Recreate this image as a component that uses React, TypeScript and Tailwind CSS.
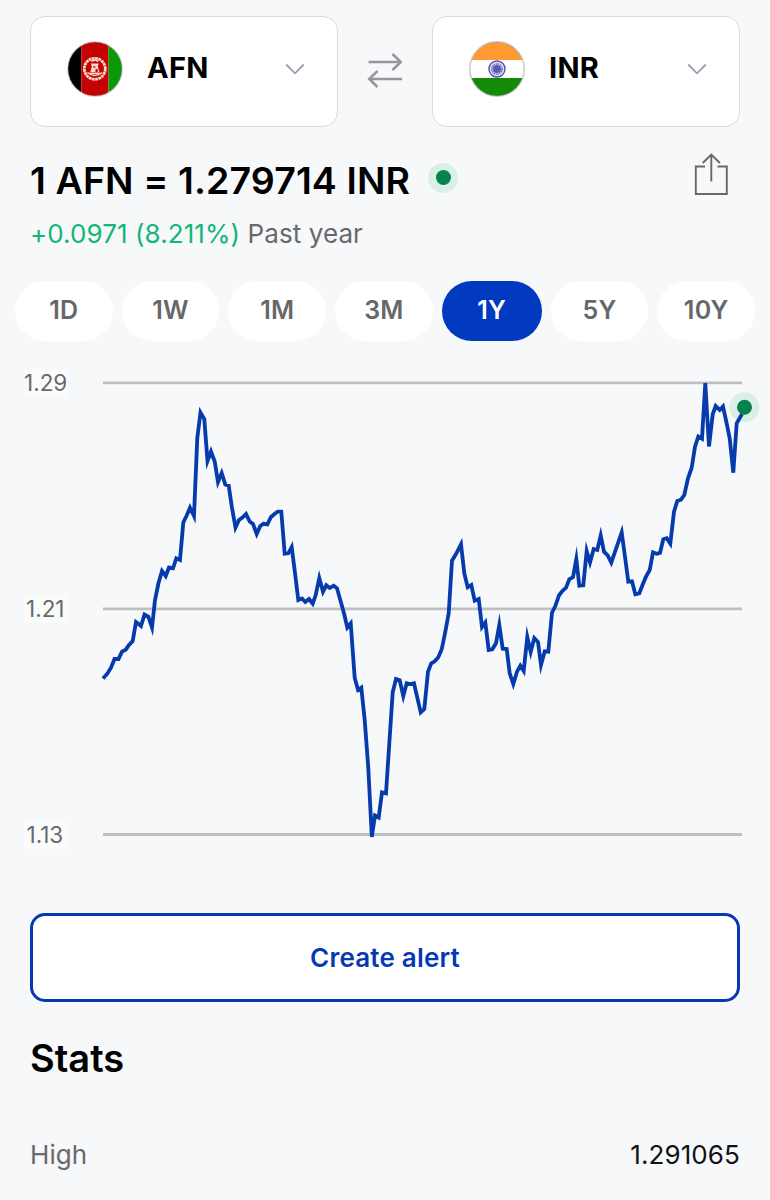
import React, { useState } from 'react';

type Point = [number, number];

const RANGES = ['1D', '1W', '1M', '3M', '1Y', '5Y', '10Y'];

const GRID = [
  { label: '1.29', x: 24, y: 382.8 },
  { label: '1.21', x: 26, y: 608.8 },
  { label: '1.13', x: 26.5, y: 834.5 },
];

const YEAR_POINTS: Point[] = [
  [103, 678.5], [107.3, 673.7], [111, 667.7], [114.5, 659], [118.5, 659], [122, 651.7], [125.7, 649.7],
  [129, 645], [132.7, 641], [136, 622], [141, 626], [144.5, 614.5], [148.3, 616.5], [152, 627.5],
  [155, 600], [158.5, 583], [162, 571], [165.7, 576], [169, 567.5], [173, 568.3], [176.3, 558.3],
  [180, 560], [183.3, 522.5], [186.7, 515.5], [190, 507.7], [194, 516], [197.3, 438], [200.5, 412.5],
  [204.3, 419], [207.5, 461], [211, 451.5], [214.7, 461.5], [218, 482], [221.7, 473], [225.3, 484.5],
  [228.7, 485.7], [232, 508], [235.5, 527.5], [239, 520], [242.5, 517.5], [246, 514], [249.7, 521.5],
  [253, 524], [256.7, 534], [260.3, 526], [263.7, 523.5], [267.3, 524.5], [271, 517], [274.5, 514],
  [277.7, 511.6], [281.3, 511.6], [284.7, 553.6], [288.3, 553.3], [291.7, 547], [295, 573], [298.3, 600],
  [302, 598.5], [305.3, 602], [309, 599], [312.7, 603.7], [315.7, 595], [319.3, 578], [323, 591.7],
  [326.3, 585.3], [329.7, 588], [333.7, 585.7], [337, 588.3], [340.3, 600], [344, 613.3], [347.3, 627.5],
  [350.7, 623.4], [354.7, 677.7], [358, 690], [361.3, 687.7], [364.7, 720], [368.3, 768], [371.8, 837],
  [375, 815.5], [378.7, 817.5], [382, 792.3], [386, 793.3], [389.3, 743.3], [392.7, 692.3], [396, 679],
  [399.7, 680.3], [403.3, 696], [406.7, 683.3], [410.3, 684], [414, 683.3], [417.3, 697.7], [420.7, 712.3],
  [424.3, 709], [428, 671.7], [431.3, 663.3], [434.7, 661.3], [438.3, 657.3], [441.7, 649.3], [445, 633.3],
  [448.7, 613.3], [452, 560.7], [456, 554], [461, 544.3], [464.3, 573.3], [467.7, 587.3], [471.3, 585],
  [474.7, 600.7], [478.7, 599], [482, 627], [485.3, 622.5], [488.7, 650], [492.3, 649.3], [496, 643.3],
  [499.3, 625], [502.7, 648.7], [506.7, 649], [509.7, 673.3], [513.3, 684], [517, 671.7], [520.3, 665.7],
  [523.7, 671], [527.3, 637], [530.7, 652], [534.3, 638], [538, 642], [541, 665], [544.7, 651.3],
  [548.3, 651.7], [552, 612.7], [555.3, 606], [559, 595.3], [562.3, 591], [566, 587.7], [569.3, 579.3],
  [573, 577], [576.3, 559], [579.3, 585.7], [583.3, 585.3], [586.7, 551], [590, 562.5], [593.7, 549],
  [597.3, 550], [600.7, 535.4], [604, 551.7], [607.7, 555.3], [611.3, 562.5], [614.7, 552.7], [621.7, 532.5],
  [625, 556.7], [628.3, 581.7], [632, 581.3], [635.3, 594.3], [639.3, 593.3], [642.5, 585], [646, 576.7],
  [649.7, 570], [653, 552.3], [656.7, 553.7], [660, 553], [663.3, 539.3], [666.7, 538.3], [670.3, 543.7],
  [674, 511.7], [677.3, 501], [681, 499.7], [684.3, 495], [688, 478.3], [691.7, 467.7], [695, 446.7],
  [698.3, 436.5], [702, 438.7], [705.3, 383], [709, 446.5], [712.7, 414.3], [715.7, 406], [719.7, 410],
  [723, 406.5], [726.3, 421.7], [729.7, 438.3], [733.3, 472.7], [736.7, 423.3], [742, 414],
];

function AfghanFlag() {
  return (
    <svg width="56" height="56" viewBox="0 0 56 56">
      <clipPath id="af-clip">
        <circle cx="28" cy="28" r="27" />
      </clipPath>
      <g clipPath="url(#af-clip)">
        <rect width="14.3" height="56" fill="#000" />
        <rect x="14.3" width="27.2" height="56" fill="#c40202" />
        <rect x="41.5" width="15" height="56" fill="#0a9a07" />
      </g>
      <circle cx="28" cy="28" r="27.2" fill="none" stroke="#999" strokeOpacity=".5" strokeWidth="1.2" />
      <g fill="none" stroke="#f7d8cb">
        <circle cx="27.8" cy="27.8" r="10.5" strokeWidth="2.8" strokeDasharray="2.8 .5" />
        <path d="M20.5 31.5q7.3 6 14.6 0" strokeWidth="1.6" />
        <path d="M24.5 20.5q3.3-2.4 6.6 0M23 32.2h9.6" strokeWidth="1.6" />
      </g>
      <path d="M24 22.6h7.8l-1 3 1.6 5.4h-9l1.4-5.4z" fill="#f7d8cb" />
      <path d="M26.3 25.2h2v1.6h-2zM28.5 28h2.2v3h-2.2z" fill="#c40202" />
    </svg>
  );
}

function IndianFlag() {
  return (
    <svg width="56" height="56" viewBox="0 0 56 56">
      <clipPath id="in-clip">
        <circle cx="28" cy="28" r="27" />
      </clipPath>
      <g clipPath="url(#in-clip)">
        <rect width="56" height="56" fill="#fff" />
        <rect width="56" height="19" fill="#ff9a33" />
        <rect y="37" width="56" height="19" fill="#138a08" />
      </g>
      <circle cx="28" cy="28" r="27.2" fill="none" stroke="#999" strokeOpacity=".5" strokeWidth="1.5" />
      <circle cx="28" cy="28" r="8" fill="#e6e5f5" stroke="#5450ad" strokeWidth="1.4" />
      <circle cx="28" cy="28" r="4.3" fill="none" stroke="#7470c0" strokeWidth="3.4" strokeDasharray="1.1 .6" />
      <circle cx="28" cy="28" r="3.8" fill="#5c58b5" />
    </svg>
  );
}

function CurrencySelect({ code, flag }: { code: string; flag: React.ReactNode }) {
  return (
    <button className="flex h-[111px] w-[308px] items-center rounded-[15px] border border-[#d9dadb] bg-white pr-8 pb-[5px] pl-9">
      {flag}
      <span className="mb-[3px] ml-6 text-[29px] leading-none font-bold tracking-[0.3px] text-black">{code}</span>
      <svg className="ml-auto" width="20" height="12" viewBox="0 0 20 12" fill="none" stroke="#97a0ac" strokeWidth="1.8">
        <path d="M1.2 1.5 10 10.3l8.8-8.8" />
      </svg>
    </button>
  );
}

function RateChart() {
  return (
    <svg className="block" width="770" height="500" viewBox="0 365 770 500">
      {GRID.map((line) => (
        <g key={line.label}>
          <rect x="24" y={line.y - 14} width="44" height="28" fill="#fafbfb" />
          <text x={line.x} y={line.y + 8} fontSize="22.5" fill="#68696b">
            {line.label}
          </text>
          <path d={`M103 ${line.y}H742`} stroke="#bebfc0" strokeWidth="2.8" />
        </g>
      ))}
      <circle cx="744.5" cy="407.3" r="15" fill="#d9f0e7" />
      <polyline
        points={YEAR_POINTS.map((p) => p.join(',')).join(' ')}
        fill="none"
        stroke="#053bad"
        strokeWidth="3.8"
        strokeMiterlimit="9"
      />
      <circle cx="744.5" cy="407.3" r="7.5" fill="#06824c" />
    </svg>
  );
}

export default function App() {
  const [range, setRange] = useState('1Y');

  return (
    <div className="h-[1200px] w-[770px] overflow-hidden bg-[#f7f8fa] font-['Inter',sans-serif]">
      {/* Currency pair */}
      <div className="flex items-center justify-between px-[30px] pt-4">
        <CurrencySelect code="AFN" flag={<AfghanFlag />} />
        <svg className="mb-[3px]" width="36" height="36" viewBox="0 0 36 36" fill="none" stroke="#96979a" strokeWidth="2.5">
          <path d="M1.5 10h32M25.5 2l8.300 8-8.300 8M35 27H3M10.500 19l-8.300 8 8.300 8" />
        </svg>
        <CurrencySelect code="INR" flag={<IndianFlag />} />
      </div>

      {/* Rate */}
      <div className="flex justify-between px-[30px] pt-[26px]">
        <div>
          <div className="flex h-14 items-center">
            <h1 className="text-[37.5px] leading-none font-semibold tracking-[0.1px] text-black">1 AFN = 1.279714 INR</h1>
            <span className="mb-[7px] ml-[18px] flex size-[30px] items-center justify-center rounded-full bg-[#d9f0e7]">
              <span className="size-[15px] rounded-full bg-[#06824c]" />
            </span>
          </div>
          <p className="mt-2 text-[26px] leading-[34px] tracking-[0.08px] text-[#68696b]">
            <span className="text-[#12b676]">+0.0971 (8.211%)</span> Past year
          </p>
        </div>
        <svg className="mr-3" width="34" height="44" viewBox="0 0 34 44" fill="none" stroke="#69696b" strokeWidth="1.9">
          <path d="M11 13.500H1.800v27.500h31V13.500H23.500M17.300 28.500V2M8.700 10l8.600-8.500 8.600 8.500" />
        </svg>
      </div>

      {/* Time range */}
      <div className="mt-[30px] flex gap-[9px] px-[15px]">
        {RANGES.map((r) => (
          <button
            key={r}
            onClick={() => setRange(r)}
            className={`h-[60px] rounded-full text-[25px] font-semibold tracking-[0.2px] ${
              r === range ? 'w-[100px] bg-[#013abf] text-white' : 'flex-1 bg-white text-[#666769]'
            }`}
          >
            {r}
          </button>
        ))}
      </div>

      <div className="mt-6">
        <RateChart />
      </div>

      <div className="px-[30px] pt-12">
        <button className="h-[89px] w-full rounded-[15px] border-[3px] border-[#0439b3] bg-white text-[26px] font-semibold tracking-[0.2px] text-[#0439b3]">
          Create alert
        </button>

        <h2 className="mt-[31px] text-[38px] leading-[50px] font-semibold text-black">Stats</h2>
        <div className="mt-[55px] flex justify-between text-[26px] leading-[34px] tracking-[0.1px]">
          <span className="text-[#68696b]">High</span>
          <span className="text-[#111213]">1.291065</span>
        </div>
      </div>
    </div>
  );
}
